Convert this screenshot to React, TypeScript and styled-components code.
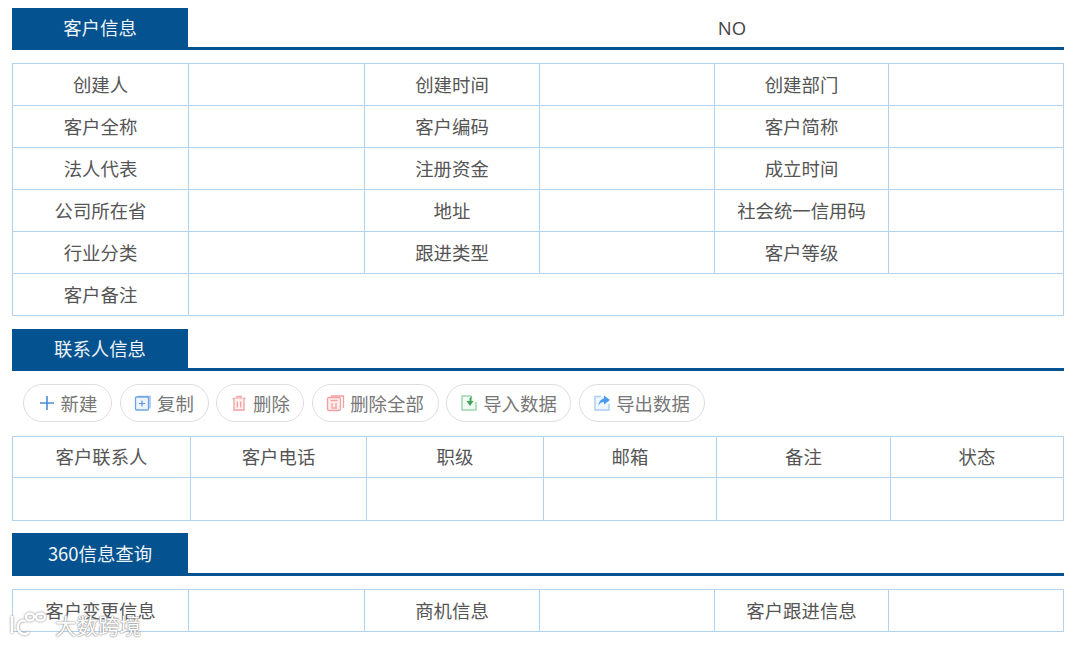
import React from "react";
import styled, { createGlobalStyle } from "styled-components";

const Global = createGlobalStyle`
  html, body { margin: 0; padding: 0; background: #fff; }
  body { font-family: "Noto Sans CJK SC", "Noto Sans", sans-serif; color: #555; }
`;

const Page = styled.div`
  position: relative;
  width: 1080px;
  height: 646px;
  box-sizing: border-box;
  padding: 8px 17px 0 12px;
  overflow: hidden;
`;

const SectionHead = styled.div<{ $after: number; $h?: number }>`
  display: flex;
  align-items: stretch;
  box-sizing: border-box;
  height: ${(p) => p.$h ?? 42}px;
  margin-right: -1px;
  border-bottom: 3px solid #04528f;
  margin-bottom: ${(p) => p.$after}px;
`;

const Tab = styled.div`
  width: 176px;
  box-sizing: border-box;
  padding-bottom: 1px;
  background: #04528f;
  color: #eef4f9;
  font-size: 18.4px;
  display: flex;
  align-items: center;
  justify-content: center;
`;

const HeadTitle = styled.div`
  flex: 1;
  display: flex;
  align-items: center;
  justify-content: center;
  font-family: "Open Sans", sans-serif;
  font-size: 18.5px;
  color: #444;
  padding-left: 212px;
  padding-bottom: 1px;
  box-sizing: border-box;
`;

const Table = styled.table<{ $after?: number }>`
  width: 100%;
  border-collapse: collapse;
  table-layout: fixed;
  margin-bottom: ${(p) => p.$after ?? 0}px;
`;

const Cell = styled.td<{ $h?: number }>`
  border: 1px solid #b2d2ee;
  height: ${(p) => p.$h ?? 40}px;
  padding: 0 0 1px;
  box-sizing: content-box;
  text-align: center;
  font-size: 18.4px;
  color: #555;
  line-height: 1;
`;

const Toolbar = styled.div`
  display: flex;
  gap: 7.5px;
  padding-left: 11px;
  margin: 13px 0 14px;
`;

const PillButton = styled.button<{ $w: number }>`
  width: ${(p) => p.$w}px;
  height: 38px;
  box-sizing: border-box;
  border: 1px solid #dedede;
  border-radius: 19px;
  background: #fff;
  display: flex;
  align-items: center;
  justify-content: center;
  gap: 5px;
  padding: 0 0 1px;
  font-family: inherit;
  font-size: 18.4px;
  color: #777;
`;

const Watermark = styled.div`
  position: absolute;
  left: 9px;
  top: 610px;
  display: flex;
  align-items: center;
  gap: 8px;
  color: #fff;
  font-size: 21.5px;
  line-height: 30px;
  text-shadow: 0 0 2px #808080, 0 0 1px #808080;
`;

const Mark = styled.svg`
  width: 38px;
  height: 30px;
  filter: drop-shadow(0 0 1px #808080);
`;

const NewIcon = () => (
  <svg width="18" height="18" viewBox="0 0 18 18">
    <path d="M9 2v14M2 9h14" stroke="#4a8ad8" strokeWidth="1.6" fill="none" />
  </svg>
);
const CopyIcon = () => (
  <svg width="18" height="18" viewBox="0 0 18 18" fill="none">
    <path d="M4 2.500h12v12" stroke="#8fb8ec" strokeWidth="1.3" />
    <rect x="1.500" y="3" width="13" height="13" rx="1" stroke="#6fa3e6" strokeWidth="1.3" fill="#eef4fc" />
    <path d="M8 6.500v6M5 9.500h6" stroke="#5c93dc" strokeWidth="1.2" />
  </svg>
);
const TrashIcon = () => (
  <svg width="18" height="18" viewBox="0 0 18 18" fill="none" stroke="#f2a0a0" strokeWidth="1.3">
    <path d="M2.500 4.500h13M7 4.500V2.500h4v2" />
    <path d="M4 4.500v11.500h10V4.500" fill="#fdf0f0" />
    <path d="M7.300 7.500v6M10.700 7.500v6" />
  </svg>
);
const TrashAllIcon = () => (
  <svg width="19" height="18" viewBox="0 0 19 18" fill="none" stroke="#f2a0a0" strokeWidth="1.3">
    <path d="M5 2h12.500v12" />
    <rect x="1.500" y="3.500" width="13" height="13" rx="1.500" fill="#fdeeee" />
    <path d="M4.500 6.500h7M6 9v5h4V9" />
  </svg>
);
const ImportIcon = () => (
  <svg width="18" height="18" viewBox="0 0 18 18" fill="none">
    <path d="M11 2H2v14h14V8" stroke="#9ed3ac" strokeWidth="1.4" fill="#f1f9f3" />
    <path d="M12 1.500 9.500 4.500V7H6.500l3.500 5 3.500-5H11.500V5z" fill="#3fa45c" />
  </svg>
);
const ExportIcon = () => (
  <svg width="18" height="18" viewBox="0 0 18 18" fill="none">
    <path d="M8 2.500H2v13.500h14V10" stroke="#a9cdf5" strokeWidth="1.4" fill="#eff6fe" />
    <path d="M11 1.500 17 6l-6 4.500V8C8.500 8 6.800 9 5.500 11.500 5.800 7.500 8 5 11 4.500z" fill="#4a9bee" />
  </svg>
);

const rowsTop = [
  ["创建人", "创建时间", "创建部门"],
  ["客户全称", "客户编码", "客户简称"],
  ["法人代表", "注册资金", "成立时间"],
  ["公司所在省", "地址", "社会统一信用码"],
  ["行业分类", "跟进类型", "客户等级"],
];

const colsA = [176, 176, 175, 175, 174, 175];
const colsB = [178, 176, 177, 173, 174, 173];

const Cols = ({ widths }: { widths: number[] }) => (
  <colgroup>
    {widths.map((w, i) => (
      <col key={i} width={w} />
    ))}
  </colgroup>
);

const buttons = [
  { label: "新建", w: 89, icon: <NewIcon /> },
  { label: "复制", w: 89, icon: <CopyIcon /> },
  { label: "删除", w: 88, icon: <TrashIcon /> },
  { label: "删除全部", w: 127, icon: <TrashAllIcon /> },
  { label: "导入数据", w: 125, icon: <ImportIcon /> },
  { label: "导出数据", w: 126, icon: <ExportIcon /> },
];

export default function App() {
  return (
    <Page>
      <Global />
      <SectionHead $after={13}>
        <Tab>客户信息</Tab>
        <HeadTitle>NO</HeadTitle>
      </SectionHead>
      <Table $after={13}>
        <Cols widths={colsA} />
        <tbody>
          {rowsTop.map((r) => (
            <tr key={r[0]}>
              {r.map((label) => (
                <React.Fragment key={label}>
                  <Cell>{label}</Cell>
                  <Cell />
                </React.Fragment>
              ))}
            </tr>
          ))}
          <tr>
            <Cell>客户备注</Cell>
            <Cell colSpan={5} />
          </tr>
        </tbody>
      </Table>

      <SectionHead $after={0}>
        <Tab>联系人信息</Tab>
      </SectionHead>
      <Toolbar>
        {buttons.map((b) => (
          <PillButton key={b.label} $w={b.w}>
            {b.icon}
            {b.label}
          </PillButton>
        ))}
      </Toolbar>
      <Table $after={12}>
        <Cols widths={colsB} />
        <tbody>
          <tr>
            {["客户联系人", "客户电话", "职级", "邮箱", "备注", "状态"].map((t) => (
              <Cell key={t} $h={39}>
                {t}
              </Cell>
            ))}
          </tr>
          <tr>
            {colsB.map((_, i) => (
              <Cell key={i} $h={41} />
            ))}
          </tr>
        </tbody>
      </Table>

      <SectionHead $after={13} $h={43}>
        <Tab>360信息查询</Tab>
      </SectionHead>
      <Table>
        <Cols widths={colsA} />
        <tbody>
          <tr>
            {["客户变更信息", "商机信息", "客户跟进信息"].map((label) => (
              <React.Fragment key={label}>
                <Cell>{label}</Cell>
                <Cell />
              </React.Fragment>
            ))}
          </tr>
        </tbody>
      </Table>

      <Watermark>
        <Mark viewBox="0 0 38 30" fill="none" stroke="#fff" strokeWidth="2.4">
          <path d="M3 6v17" />
          <path d="M17 11c-8-3-11 8-5 12 3 2 6 1 8-1" />
          <ellipse cx="21" cy="7" rx="4" ry="3.500" />
          <ellipse cx="31.500" cy="7" rx="4.500" ry="3.500" />
        </Mark>
        <span>大数跨境</span>
      </Watermark>
    </Page>
  );
}
